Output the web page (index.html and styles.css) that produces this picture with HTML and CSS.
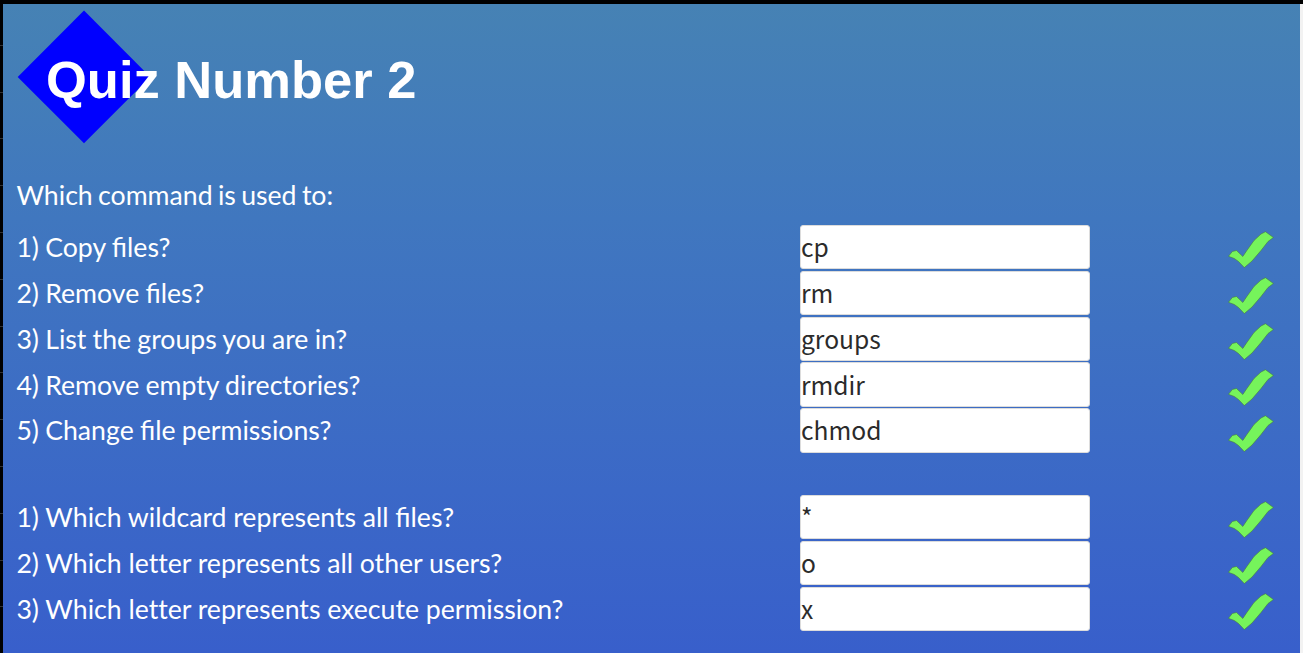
FILE: index.html
```
<!DOCTYPE html>
<html lang="en">
<head>
<meta charset="utf-8">
<title>Quiz Number 2</title>
<link rel="stylesheet" href="styles.css">
</head>
<body>
<svg width="0" height="0" class="defs"><symbol id="tick" viewBox="0 0 46 38"><path d="M.5 25.3 L4.3 20.5 L8.5 19.5 L14.8 25.5 L18.5 20 L26 9.5 L33 3 L37.5 .7 L45.4 6.5 L40 10.5 L33 19.5 L24 30 L16.3 36.6 L10.5 30.5 L6.3 27.5Z"/></symbol></svg>
<div class="frame">
<div class="rail"></div>
<main class="quiz">
  <header class="banner">
    <svg class="diamond" viewBox="0 0 134 134"><path d="M67 .5 L133.3 67 L67 133.3 L.7 67Z"/></svg>
    <h1 class="title">Quiz Number 2</h1>
  </header>
  <p class="intro">Which command is used to:</p>
  <section class="group">
    <div class="row"><label for="a1">1) Copy files?</label><input id="a1" value="cp"><svg class="tick"><use href="#tick"/></svg></div>
    <div class="row"><label for="a2">2) Remove files?</label><input id="a2" value="rm"><svg class="tick"><use href="#tick"/></svg></div>
    <div class="row"><label for="a3">3) List the groups you are in?</label><input id="a3" value="groups"><svg class="tick"><use href="#tick"/></svg></div>
    <div class="row"><label for="a4">4) Remove empty directories?</label><input id="a4" value="rmdir"><svg class="tick"><use href="#tick"/></svg></div>
    <div class="row"><label for="a5">5) Change file permissions?</label><input id="a5" value="chmod"><svg class="tick"><use href="#tick"/></svg></div>
  </section>
  <section class="group wide">
    <div class="row"><label for="b1">1) Which wildcard represents all files?</label><input id="b1" value="*"><svg class="tick"><use href="#tick"/></svg></div>
    <div class="row plain"><label for="b2">2) Which letter represents all other users?</label><input id="b2" value="o"><svg class="tick"><use href="#tick"/></svg></div>
    <div class="row plain"><label for="b3">3) Which letter represents execute permission?</label><input id="b3" value="x"><svg class="tick"><use href="#tick"/></svg></div>
  </section>
</main>
<div class="edge"></div>
</div>
</body>
</html>
```
FILE: styles.css
```
* { box-sizing: border-box; }
body { margin: 0; background: #000; overflow: hidden; }
.defs { display: block; }
.frame { display: flex; height: 653px; padding-top: 4px; }
.rail { width: 3px; background: repeating-linear-gradient(#000 0 45.8px, #333 45.8px 46.8px); background-position: 0 -5px; }
.edge { width: 3px; background: #f2f2f2; }
.quiz {
  width: 1297px;
  padding: 6px 0 0 13.4px;
  background: linear-gradient(#4682b4, #4077bf 33%, #3b68c7 75%, #385fcb);
  color: #fff;
  font: 26.67px/44px Lato, sans-serif;
}
.banner { display: flex; align-items: center; height: 133px; margin-left: .6px; }
.diamond { flex: none; width: 134px; height: 134px; fill: #00f; }
.title { margin: 6px 0 0 -105px; font: bold 52.5px/60px "Liberation Sans", Arial, sans-serif; position: relative; white-space: nowrap; }
.intro { margin: 30px 0 8.1px; word-spacing: -1.5px; }
.group { display: grid; gap: 1.5px; margin-bottom: 42.6px; word-spacing: -.6px; }
.wide { word-spacing: -.1px; }
.row { display: grid; grid-template: 44.3px / 783.6px 290px 46px; height: 44.3px; align-items: center; }
.plain label { font-variant-ligatures: none; }
.row .tick { margin-left: 138.4px; width: 46px; height: 38px; fill: #76f45b; stroke: #487d3c; stroke-width: .6; margin-top: 6.3px; }
.row input {
  width: 290px; height: 44.3px; padding: 0 0 2px;
  border: 1px solid #dcdcdc; border-radius: 3px; background: #fff;
  color: #2b2b2b; font: 24.6px/40px "Noto Sans CJK SC", sans-serif;
}
```
